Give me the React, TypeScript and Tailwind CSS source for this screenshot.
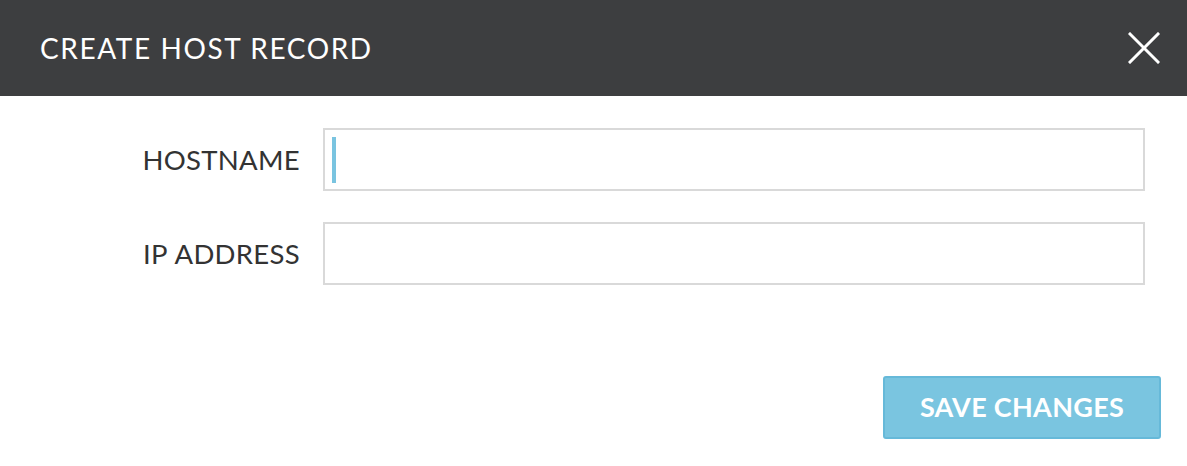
import React from 'react';

const FIELDS = [
  { id: 'hostname', label: 'HOSTNAME', focused: true },
  { id: 'ip', label: 'IP ADDRESS', focused: false },
];

export default function App() {
  return (
    <div className="w-[1187px] h-[466px] bg-white font-['Lato',sans-serif] flex flex-col">
      {/* Modal header */}
      <header className="h-[96px] bg-[#3d3e40] flex items-center justify-between pl-[40px] pr-[27px]">
        <h1 className="text-white text-[28px] tracking-[1.6px]">CREATE HOST RECORD</h1>
        <button className="w-[32px] h-[32px] flex items-center justify-center">
          <svg width="32" height="32" viewBox="0 0 32 32" fill="none" stroke="white" strokeWidth="3" strokeLinecap="square">
            <path d="M2 2L30 30M30 2L2 30" />
          </svg>
        </button>
      </header>

      {/* Form body */}
      <div className="flex flex-col gap-[31px] pt-[32px] pr-[42px]">
        {FIELDS.map((f) => (
          <div key={f.id} className="flex items-center">
            <label className="w-[301px] pr-[1px] text-right text-[27.5px] text-[#333] tracking-[0.3px] [word-spacing:1px]">{f.label}</label>
            <div className="ml-[22px] flex-1 h-[63px] border-2 border-[#d9d9d9] relative">
              {f.focused && <span className="absolute left-[7px] top-[7px] w-[4px] h-[46px] bg-[#7ac4e0]" />}
            </div>
          </div>
        ))}
      </div>

      {/* Footer */}
      <div className="flex justify-end pr-[26px] mt-[91px]">
        <button className="w-[278px] h-[63px] rounded-[3px] bg-[#7ac5e0] border-2 border-[#66b9d9] text-white font-bold text-[27px] tracking-[0.3px]">
          SAVE CHANGES
        </button>
      </div>
    </div>
  );
}
